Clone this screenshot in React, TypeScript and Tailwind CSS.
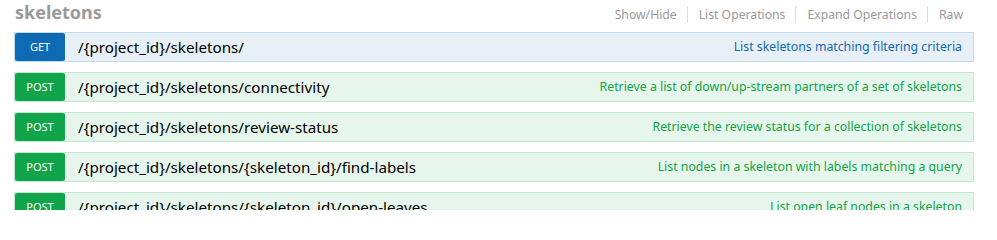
const endpoints = [
  { method: 'GET', path: '/{project_id}/skeletons/', summary: 'List skeletons matching filtering criteria' },
  { method: 'POST', path: '/{project_id}/skeletons/connectivity', summary: 'Retrieve a list of down/up-stream partners of a set of skeletons' },
  { method: 'POST', path: '/{project_id}/skeletons/review-status', summary: 'Retrieve the review status for a collection of skeletons' },
  { method: 'POST', path: '/{project_id}/skeletons/{skeleton_id}/find-labels', summary: 'List nodes in a skeleton with labels matching a query' },
  { method: 'POST', path: '/{project_id}/skeletons/{skeleton_id}/open-leaves', summary: 'List open leaf nodes in a skeleton' },
];

function EndpointRow({ method, path, summary }: { method: string; path: string; summary: string }) {
  const isGet = method === 'GET';
  return (
    <div
      className={
        'flex h-[30px] items-center border ' +
        (isGet ? 'border-[#c3d9ec] bg-[#e7f0f7]' : 'border-[#c3e8d1] bg-[#e7f6ec]')
      }
    >
      <span
        className={
          'flex h-[28px] w-[50px] shrink-0 items-center justify-center rounded-[2px] text-[11px] text-white ' +
          (isGet ? 'bg-[#0f6ab4]' : 'bg-[#10a54a]')
        }
      >
        {method}
      </span>
      <span className="ml-[13px] text-[15.2px] text-black">{path}</span>
      <span className={'ml-auto pr-[11px] text-[12.3px] ' + (isGet ? 'text-[#0f6ab4]' : 'text-[#10a54a]')}>
        {summary}
      </span>
    </div>
  );
}

export default function App() {
  const links = ['Show/Hide', 'List Operations', 'Expand Operations', 'Raw'];
  return (
    <div className="h-[210px] overflow-hidden bg-white pl-[14px] pr-[23px]" style={{ fontFamily: '"Noto Sans", "Open Sans", sans-serif' }}>
      <div className="flex h-[32px] items-start justify-between">
        <h2 className="ml-[1px] mt-[-1px] text-[18px] font-bold text-[#999]">skeletons</h2>
        <ul className="mr-[11px] mt-[6px] flex items-center text-[12.2px] text-[#999]">
          {links.map((l, i) => (
            <li
              key={l}
              className={'leading-[17px] ' + (i > 0 ? 'border-l border-[#ddd] pl-[11px] ' : '') + (i < links.length - 1 ? 'pr-[10px]' : '')}
            >
              {l}
            </li>
          ))}
        </ul>
      </div>
      <div className="flex flex-col gap-[10px]">
        {endpoints.map((e) => (
          <EndpointRow key={e.path} {...e} />
        ))}
      </div>
    </div>
  );
}
